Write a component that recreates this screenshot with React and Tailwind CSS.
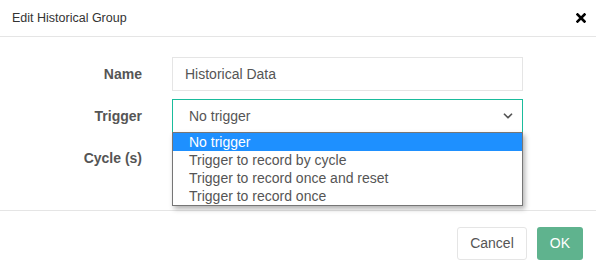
import { ChevronDown } from 'lucide-react';

const options = ['No trigger', 'Trigger to record by cycle', 'Trigger to record once and reset', 'Trigger to record once'];

const Row = ({ label, children }) => (
  <div className="flex items-center h-[34px]">
    <label className="w-[142px] text-right text-[14px] font-bold text-[#555]">{label}</label>
    <div className="ml-[30px] w-[351px] relative">{children}</div>
  </div>
);

export default function App() {
  return (
    <div className="w-[596px] h-[273px] bg-white font-['Liberation_Sans',Arial,sans-serif] text-[#333] overflow-hidden">
      <div className="flex items-center justify-between h-[37px] px-3 border-b border-[#e5e5e5]">
        <span className="text-[12.5px] text-[#333]">Edit Historical Group</span>
        <svg width="10" height="10" viewBox="0 0 10 10" className="mr-[-2px]">
          <path d="M1.5 1.5 L8.5 8.5 M8.5 1.5 L1.5 8.5" stroke="#000" strokeWidth="2.6" strokeLinecap="square" />
        </svg>
      </div>

      <div className="flex flex-col gap-[8px] pt-[20px] pb-[35px]">
        <Row label="Name">
          <input
            type="text"
            defaultValue="Historical Data"
            className="w-full h-[34px] px-3 border border-[#e5e5e5] text-[14px] text-[#555] outline-none"
          />
        </Row>
        <Row label="Trigger">
          <div className="w-full h-[34px] flex items-center justify-between pl-4 pr-[7px] border border-[#1abc9c] text-[14px] text-[#555]">
            <span>No trigger</span>
            <ChevronDown size={14} strokeWidth={3} className="text-[#555]" />
          </div>
          <div className="absolute left-0 top-[33px] w-full border border-[#767676] bg-white shadow-[2px_3px_5px_rgba(0,0,0,0.3)] z-10">
            {options.map((o, i) => (
              <div
                key={o}
                className={`h-[18px] leading-[18px] pl-4 text-[14px] ${i === 0 ? 'bg-[#1e90ff] text-white' : 'text-[#555]'}`}
              >
                {o}
              </div>
            ))}
          </div>
        </Row>
        <Row label="Cycle (s)">
          <input type="text" className="w-full h-[34px] px-3 border border-[#e5e5e5] text-[14px] outline-none" />
        </Row>
      </div>

      <div className="flex justify-end items-center gap-[10px] border-t border-[#e5e5e5] pt-[16px] pr-[13px]">
        <button className="h-[33px] px-3 border border-[#e5e5e5] rounded-[3px] bg-white text-[14px] text-[#555]">Cancel</button>
        <button className="h-[33px] px-[13px] rounded-[3px] bg-[#5fb38e] text-[14px] text-white">OK</button>
      </div>
    </div>
  );
}
